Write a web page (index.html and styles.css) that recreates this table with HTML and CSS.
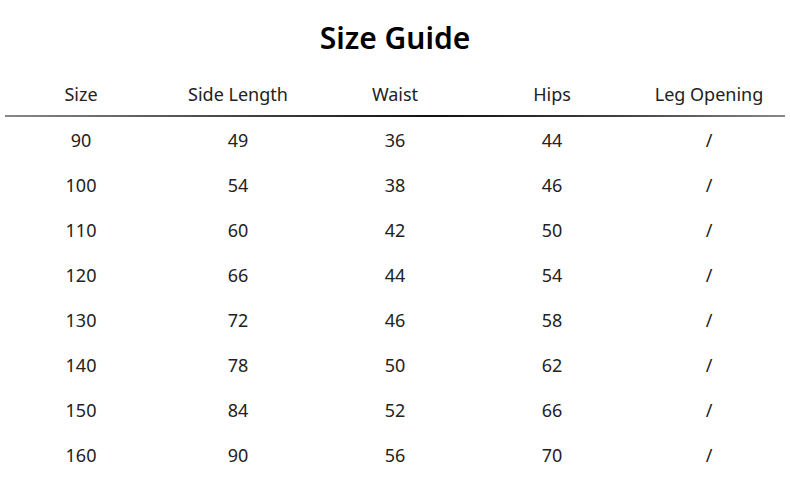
FILE: index.html
```html
<!DOCTYPE html>
<html>
<head>
<meta charset="utf-8">
<link rel="stylesheet" href="styles.css">
</head>
<body>
<div class="page">
  <h1 class="title">Size Guide</h1>
  <div class="table">
    <div class="row head">
      <div class="cell">Size</div><div class="cell">Side Length</div><div class="cell">Waist</div><div class="cell">Hips</div><div class="cell">Leg Opening</div>
    </div>
    <div class="rule"></div>
    <div class="row"><div class="cell">90</div><div class="cell">49</div><div class="cell">36</div><div class="cell">44</div><div class="cell">/</div></div>
    <div class="row"><div class="cell">100</div><div class="cell">54</div><div class="cell">38</div><div class="cell">46</div><div class="cell">/</div></div>
    <div class="row"><div class="cell">110</div><div class="cell">60</div><div class="cell">42</div><div class="cell">50</div><div class="cell">/</div></div>
    <div class="row"><div class="cell">120</div><div class="cell">66</div><div class="cell">44</div><div class="cell">54</div><div class="cell">/</div></div>
    <div class="row"><div class="cell">130</div><div class="cell">72</div><div class="cell">46</div><div class="cell">58</div><div class="cell">/</div></div>
    <div class="row"><div class="cell">140</div><div class="cell">78</div><div class="cell">50</div><div class="cell">62</div><div class="cell">/</div></div>
    <div class="row"><div class="cell">150</div><div class="cell">84</div><div class="cell">52</div><div class="cell">66</div><div class="cell">/</div></div>
    <div class="row"><div class="cell">160</div><div class="cell">90</div><div class="cell">56</div><div class="cell">70</div><div class="cell">/</div></div>
  </div>
</div>
</body>
</html>
```
FILE: styles.css
```css
html, body {
  margin: 0;
  padding: 0;
  background: #ffffff;
}
body {
  font-family: "Noto Sans", "Open Sans", sans-serif;
  color: #222;
  width: 790px;
  height: 490px;
  overflow: hidden;
}
.page {
  padding-top: 19px;
}
.title {
  margin: 0;
  text-align: center;
  font-size: 30px;
  font-weight: 600;
  line-height: 38px;
  color: #000;
}
.table {
  margin-top: 16px;
  padding: 0 2.5px;
}
.row {
  display: grid;
  grid-template-columns: repeat(5, 157px);
  height: 45px;
  align-items: center;
  font-size: 18px;
}
.row.head {
  height: 42px;
}
.cell {
  text-align: center;
  line-height: 24px;
}
.rule {
  height: 2px;
  margin: 0 2.5px;
  background: linear-gradient(to right, #888 0%, #444 30%, #111 55%, #444 80%, #888 100%);
}
```
